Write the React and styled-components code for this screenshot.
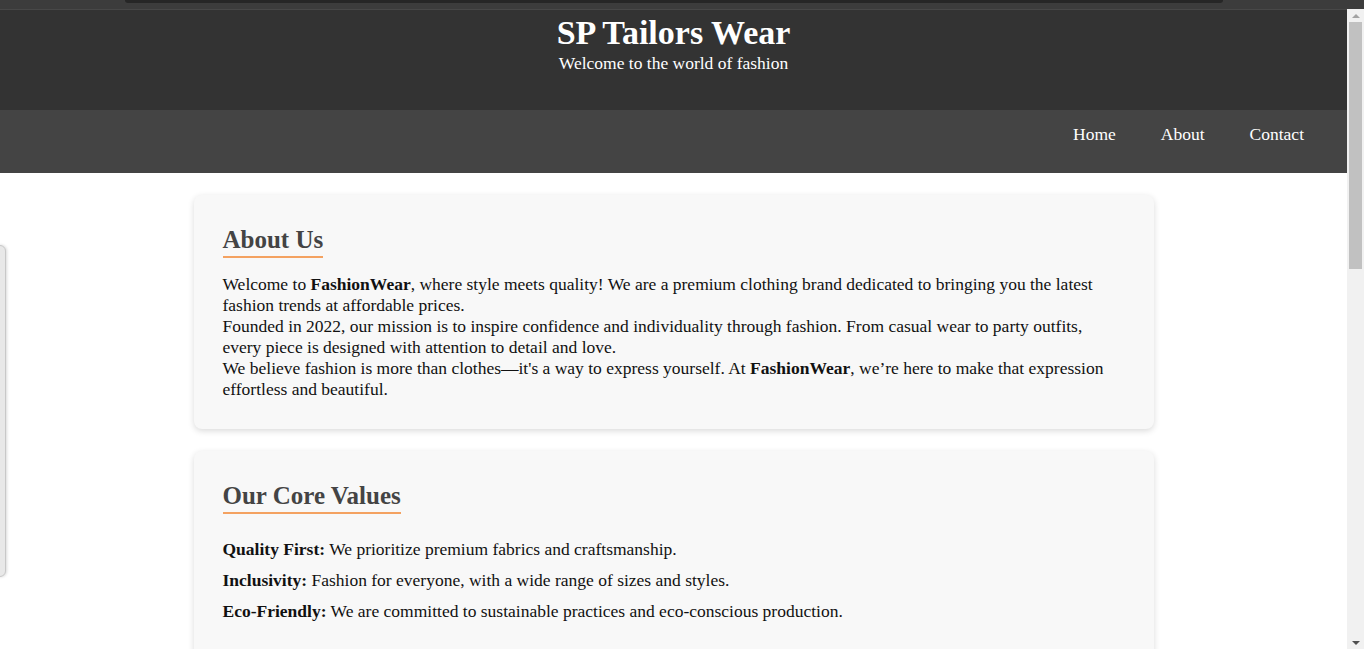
import React from "react";
import styled, { createGlobalStyle } from "styled-components";

const GlobalStyle = createGlobalStyle`
  html, body {
    margin: 0;
    padding: 0;
    background: #ffffff;
    font-family: "Liberation Serif", "DejaVu Serif", serif;
  }
  * {
    box-sizing: border-box;
  }
`;

const values = [
  { name: "Quality First:", text: "We prioritize premium fabrics and craftsmanship." },
  { name: "Inclusivity:", text: "Fashion for everyone, with a wide range of sizes and styles." },
  {
    name: "Eco-Friendly:",
    text: "We are committed to sustainable practices and eco-conscious production.",
  },
];

export default function App() {
  return (
    <>
      <GlobalStyle />
      <TopStrip>
        <TopBar />
      </TopStrip>
      <Page>
        <Header>
          <Title>SP Tailors Wear</Title>
          <Tagline>Welcome to the world of fashion</Tagline>
        </Header>
        <Nav>
          <NavLink href="#">Home</NavLink>
          <NavLink href="#">About</NavLink>
          <NavLink href="#">Contact</NavLink>
        </Nav>
        <Main>
          <Card>
            <Heading>About Us</Heading>
            <Text>
              Welcome to <b>FashionWear</b>, where style meets quality! We are a premium clothing
              brand dedicated to bringing you the latest fashion trends at affordable prices.
            </Text>
            <Text>
              Founded in 2022, our mission is to inspire confidence and individuality through
              fashion. From casual wear to party outfits, every piece is designed with attention
              to detail and love.
            </Text>
            <Text>
              We believe fashion is more than clothes—it's a way to express yourself. At{" "}
              <b>FashionWear</b>, we’re here to make that expression effortless and beautiful.
            </Text>
          </Card>
          <Card>
            <Heading>Our Core Values</Heading>
            <List>
              {values.map((v) => (
                <Item key={v.name}>
                  <b>{v.name}</b> {v.text}
                </Item>
              ))}
            </List>
          </Card>
        </Main>
      </Page>
      <SideTab />
      <Scrollbar>
        <Arrow />
        <Thumb />
        <Arrow down />
      </Scrollbar>
    </>
  );
}

const TopStrip = styled.div`
  height: 10px;
  background: #3c3c3c;
  border-bottom: 1px solid #484848;
  display: flex;
  justify-content: center;
  padding-right: 17px;
`;

const TopBar = styled.div`
  width: 1098px;
  height: 3px;
  background: #262626;
  border-radius: 0 0 6px 6px;
`;

const Page = styled.div`
  margin-right: 17px;
`;

const Header = styled.header`
  height: 100px;
  background: #333333;
  color: #ffffff;
  text-align: center;
  padding-top: 4px;
`;

const Title = styled.h1`
  margin: 0;
  font-size: 34px;
  line-height: 38px;
  font-weight: 700;
`;

const Tagline = styled.p`
  margin: 0;
  font-size: 17.5px;
  line-height: 22px;
`;

const Nav = styled.nav`
  height: 63px;
  background: #444444;
  display: flex;
  justify-content: flex-end;
  align-items: flex-start;
  gap: 45px;
  padding: 14px 43px 0 0;
`;

const NavLink = styled.a`
  color: #ffffff;
  text-decoration: none;
  font-size: 17.5px;
  line-height: 21px;
`;

const SideTab = styled.div`
  position: fixed;
  left: -8px;
  top: 245px;
  width: 14px;
  height: 332px;
  background: #e8e8e8;
  border: 1px solid #c8c8c8;
  border-radius: 6px;
  box-shadow: 1px 0 3px rgba(0, 0, 0, 0.15);
`;

const Scrollbar = styled.div`
  position: fixed;
  top: 9px;
  right: 0;
  bottom: 0;
  width: 17px;
  background: #f1f1f1;
  display: flex;
  flex-direction: column;
  align-items: center;
  padding: 5px 0 4px;
`;

const Arrow = styled.div`
  width: 0;
  height: 0;
  border-left: 4px solid transparent;
  border-right: 4px solid transparent;
  ${(p) =>
    p.down
      ? "border-top: 4px solid #505050; margin-top: auto;"
      : "border-bottom: 4px solid #a3a3a3;"}
`;

const Thumb = styled.div`
  width: 13px;
  height: 247px;
  margin-top: 4px;
  background: #c1c1c1;
`;

const Main = styled.main`
  width: 960px;
  margin: 22px auto 0;
  display: flex;
  flex-direction: column;
  gap: 22px;
`;

const Card = styled.section`
  background: #f8f8f8;
  border-radius: 8px;
  box-shadow: 0 2px 6px rgba(0, 0, 0, 0.15);
  padding: 28px 30px 29px 29px;
`;

const Heading = styled.h2`
  display: inline-block;
  margin: 0 0 16px;
  font-size: 25px;
  line-height: 33px;
  font-weight: 700;
  color: #444444;
  border-bottom: 2px solid #f4a261;
`;

const Text = styled.p`
  margin: 0;
  font-size: 17.5px;
  line-height: 21px;
  color: #111111;
`;

const List = styled.div`
  padding-top: 9px;
  padding-bottom: 20px;
`;

const Item = styled.p`
  margin: 0 0 10px;
  font-size: 17.5px;
  line-height: 21px;
  color: #111111;
`;
